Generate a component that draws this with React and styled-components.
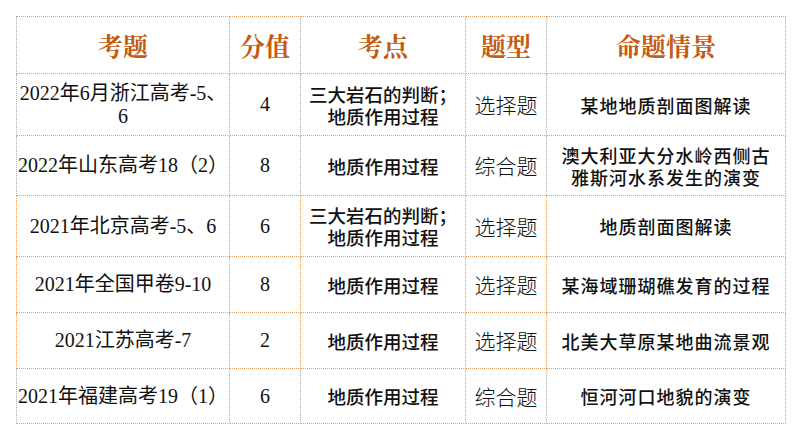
import React from "react";
import styled, { createGlobalStyle } from "styled-components";

const Global = createGlobalStyle`
  html, body { margin: 0; padding: 0; background: #ffffff; }
  body { font-family: "Liberation Serif", "Noto Sans CJK SC", serif; color: #111; }
`;

const Page = styled.div`
  width: 794px;
  height: 446px;
  padding: 16px 0 0 16px;
  box-sizing: border-box;
`;

const Table = styled.table`
  border-collapse: collapse;
  table-layout: fixed;
  width: 764px;
`;

const Row = styled.tr`
  height: ${(p) => p.$h}px;
`;

const Head = styled.th`
  border: 1px dotted #e0a266;
  padding: 0;
  font-family: "Noto Serif CJK SC", "Noto Sans CJK SC", serif;
  font-weight: 700;
  font-size: 25px;
  color: #c55a11;
  text-align: center;
  vertical-align: middle;
  width: ${(p) => p.$w}px;
`;

const Cell = styled.td`
  border: 1px dotted #e0a266;
  padding: 0;
  text-align: center;
  vertical-align: middle;
  line-height: ${(p) => p.$lh || 23}px;
  white-space: nowrap;
  overflow: visible;
  font-size: ${(p) => p.$size || 17}px;
  font-weight: ${(p) => p.$weight || 400};
  font-family: ${(p) =>
    p.$serif
      ? '"Liberation Serif", "Noto Sans CJK SC", serif'
      : '"Noto Sans CJK SC", sans-serif'};
  letter-spacing: ${(p) => p.$ls || 0}px;
`;

const cols = [
  { label: "考题", w: 212 },
  { label: "分值", w: 70 },
  { label: "考点", w: 164 },
  { label: "题型", w: 80 },
  { label: "命题情景", w: 238 },
];

const rows = [
  {
    h: 62,
    q: ["2022年6月浙江高考-5、", "6"],
    s: "4",
    k: ["三大岩石的判断；", "地质作用过程"],
    t: "选择题",
    c: ["某地地质剖面图解读"],
  },
  {
    h: 60,
    q: ["2022年山东高考18（2）"],
    s: "8",
    k: ["地质作用过程"],
    t: "综合题",
    c: ["澳大利亚大分水岭西侧古", "雅斯河水系发生的演变"],
  },
  {
    h: 61,
    q: ["2021年北京高考-5、6"],
    s: "6",
    k: ["三大岩石的判断；", "地质作用过程"],
    t: "选择题",
    c: ["地质剖面图解读"],
  },
  {
    h: 56,
    q: ["2021年全国甲卷9-10"],
    s: "8",
    k: ["地质作用过程"],
    t: "选择题",
    c: ["某海域珊瑚礁发育的过程"],
  },
  {
    h: 56,
    q: ["2021江苏高考-7"],
    s: "2",
    k: ["地质作用过程"],
    t: "选择题",
    c: ["北美大草原某地曲流景观"],
  },
  {
    h: 55,
    q: ["2021年福建高考19（1）"],
    s: "6",
    k: ["地质作用过程"],
    t: "综合题",
    c: ["恒河河口地貌的演变"],
  },
];

const Lines = ({ lines }) =>
  lines.map((l, i) => (
    <React.Fragment key={i}>
      {i > 0 && <br />}
      {l}
    </React.Fragment>
  ));

export default function App() {
  return (
    <Page>
      <Global />
      <Table>
        <thead>
          <Row $h={57}>
            {cols.map((c) => (
              <Head key={c.label} $w={c.w}>
                {c.label}
              </Head>
            ))}
          </Row>
        </thead>
        <tbody>
          {rows.map((r, i) => (
            <Row key={i} $h={r.h}>
              <Cell $serif $size={20}>
                <Lines lines={r.q} />
              </Cell>
              <Cell $serif $size={20}>
                {r.s}
              </Cell>
              <Cell $size={18.5} $weight={500} $lh={22}>
                <Lines lines={r.k} />
              </Cell>
              <Cell $size={21} $weight={300}>
                {r.t}
              </Cell>
              <Cell $size={18} $weight={500} $ls={1} $lh={22}>
                <Lines lines={r.c} />
              </Cell>
            </Row>
          ))}
        </tbody>
      </Table>
    </Page>
  );
}
